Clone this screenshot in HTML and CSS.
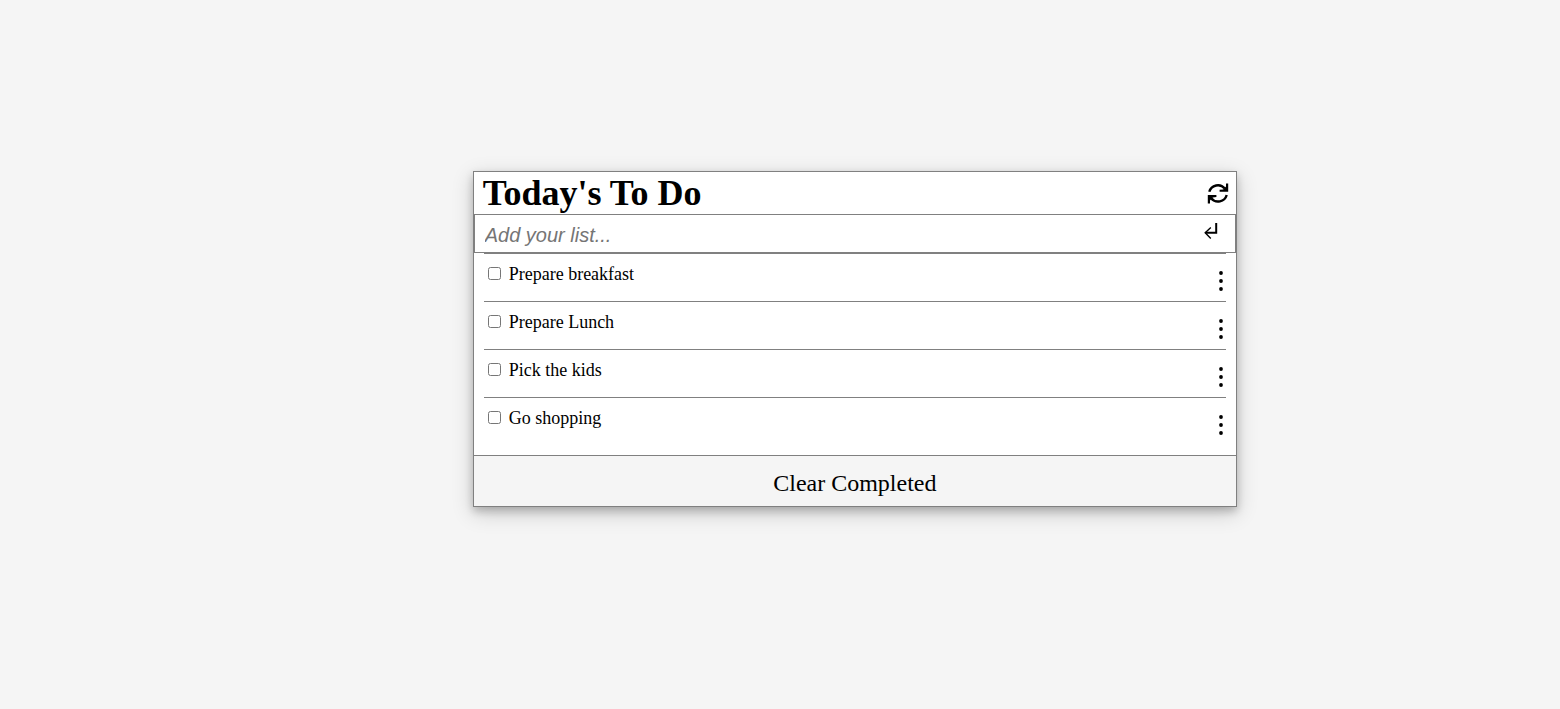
FILE: index.html
```html
<!DOCTYPE html>
<html lang="en">
<head>
<meta charset="utf-8">
<title>Today's To Do</title>
<link rel="stylesheet" href="styles.css">
</head>
<body>
<main class="todo">
  <header class="todo-header">
    <h1 class="todo-title">Today's To Do</h1>
    <button class="icon-button" type="button" aria-label="Refresh">
      <svg class="icon-refresh" viewBox="0 0 22 22" aria-hidden="true">
        <path d="M2.3 9.8A8.9 8.9 0 0 1 17.8 6.6M19.7 13A8.9 8.9 0 0 1 4.2 16.2" fill="none" stroke="#000" stroke-width="2.4"/>
        <path d="M21.2 1.4V9.8H12.6V7.8L16.2 7.4L19 4.4V1.4ZM0.8 21.4V13H9.4V15L5.8 15.4L3 18.4V21.4Z"/>
      </svg>
    </button>
  </header>
  <form class="add-form">
    <input class="add-input" type="text" placeholder="Add your list..." aria-label="Add your list">
    <button class="icon-button" type="button" aria-label="Add">
      <svg class="icon-enter" viewBox="0 0 14 18" aria-hidden="true">
        <path d="M12.2 1V10.8H1.5" fill="none" stroke="#000" stroke-width="2"/>
        <path d="M6.8 5.6L1.2 10.8L6.8 16.4" fill="none" stroke="#000" stroke-width="1.4"/>
      </svg>
    </button>
  </form>
  <ul class="list">
    <li class="item">
      <label class="item-label"><input class="item-check" type="checkbox">Prepare breakfast</label>
      <button class="icon-button" type="button" aria-label="Options"><svg class="icon-dots" viewBox="0 0 4 20" aria-hidden="true"><circle cx="2" cy="2" r="1.9"/><circle cx="2" cy="10" r="1.9"/><circle cx="2" cy="18" r="1.9"/></svg></button>
    </li>
    <li class="item">
      <label class="item-label"><input class="item-check" type="checkbox">Prepare Lunch</label>
      <button class="icon-button" type="button" aria-label="Options"><svg class="icon-dots" viewBox="0 0 4 20" aria-hidden="true"><circle cx="2" cy="2" r="1.9"/><circle cx="2" cy="10" r="1.9"/><circle cx="2" cy="18" r="1.9"/></svg></button>
    </li>
    <li class="item">
      <label class="item-label"><input class="item-check" type="checkbox">Pick the kids</label>
      <button class="icon-button" type="button" aria-label="Options"><svg class="icon-dots" viewBox="0 0 4 20" aria-hidden="true"><circle cx="2" cy="2" r="1.9"/><circle cx="2" cy="10" r="1.9"/><circle cx="2" cy="18" r="1.9"/></svg></button>
    </li>
    <li class="item">
      <label class="item-label"><input class="item-check" type="checkbox">Go shopping</label>
      <button class="icon-button" type="button" aria-label="Options"><svg class="icon-dots" viewBox="0 0 4 20" aria-hidden="true"><circle cx="2" cy="2" r="1.9"/><circle cx="2" cy="10" r="1.9"/><circle cx="2" cy="18" r="1.9"/></svg></button>
    </li>
  </ul>
  <button class="clear-button" type="button">Clear Completed</button>
</main>
</body>
</html>
```

FILE: styles.css
```css
* {
  box-sizing: border-box;
}

body {
  margin: 0;
  padding: 171px 0 40px;
  background: #f5f5f5;
  color: #000;
  font-family: "Liberation Serif", "Times New Roman", serif;
}

.todo {
  width: 49%;
  margin-left: 30.3%;
  border: 1px solid #808080;
  background: #fff;
  box-shadow: 0 4px 8px rgba(0, 0, 0, 0.2), 0 6px 20px rgba(0, 0, 0, 0.19);
}

.todo-header {
  display: flex;
  align-items: center;
  justify-content: space-between;
  padding: 0 7px 0 9px;
}

.todo-title {
  margin: 0;
  font-size: 36px;
  line-height: 42px;
}

.icon-button {
  display: flex;
  padding: 0;
  border: 0;
  background: none;
  cursor: pointer;
}

.icon-refresh {
  width: 22px;
  height: 22px;
}

.icon-enter {
  width: 14px;
  height: 18px;
}

.icon-dots {
  width: 4px;
  height: 20px;
}

.add-form {
  display: flex;
  align-items: flex-start;
  padding: 7px 17px 6px 10px;
  border: 1px solid #808080;
}

.add-input {
  flex: 1;
  min-width: 0;
  height: 24px;
  margin: 0;
  padding: 3px 0 0;
  border: 0;
  outline: 0;
  background: none;
  font: italic 20px "Liberation Sans", Arial, sans-serif;
}

.add-input::placeholder {
  color: #757575;
}

.list {
  margin: 0;
  padding: 0 10px 10px;
  list-style: none;
}

.item {
  display: flex;
  justify-content: space-between;
  padding: 10px 3px 10px 4px;
  border-top: 1px solid #808080;
}

.item .icon-button {
  padding-top: 7px;
}

.item-label {
  display: flex;
  align-items: flex-start;
  gap: 8px;
  font-size: 18px;
  line-height: 20px;
}

.item-check {
  width: 13px;
  height: 13px;
  margin: 3px 0 0;
}

.clear-button {
  display: block;
  width: 100%;
  padding: 13px 0 9px;
  border: 0;
  border-top: 1px solid #808080;
  background: #f5f5f5;
  color: #000;
  font-family: inherit;
  font-size: 24px;
  line-height: 28px;
  cursor: pointer;
}
```
